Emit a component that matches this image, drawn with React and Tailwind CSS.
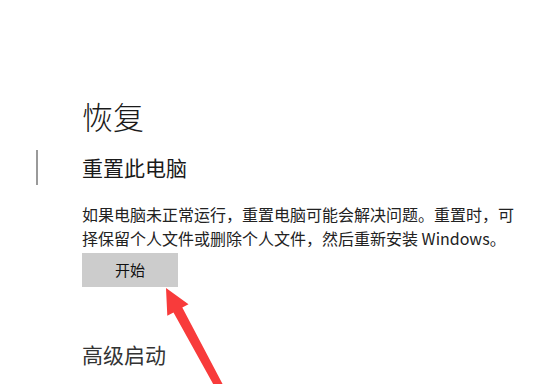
import React from 'react';

const font = { fontFamily: '"Noto Sans CJK SC", "Noto Sans", sans-serif' };

const App = () => {
  return (
    <div className="relative w-[557px] h-[384px] bg-white overflow-hidden flex" style={font}>
      {/* left nav rail, only the selection marker is visible */}
      <div className="w-[82px] shrink-0 pl-[36px] pt-[150px]">
        <div className="w-[2px] h-[35px] bg-[#9a9a9a]" />
      </div>

      <div className="flex-1 pt-[96px] text-[#1a1a1a]">
        <h1 className="text-[31px] leading-[40px] font-light">恢复</h1>
        <h2 className="mt-[16px] text-[21px] leading-[30px]">重置此电脑</h2>
        <div className="mt-[20px] text-[16px] leading-[24px] text-[#222]">
          <div className="whitespace-nowrap">如果电脑未正常运行，重置电脑可能会解决问题。重置时，可</div>
          <div className="whitespace-nowrap">择保留个人文件或删除个人文件，然后重新安装 Windows。</div>
        </div>
        <button className="mt-[3px] w-[96px] h-[34px] bg-[#cccccc] text-[15px] text-[#111]">开始</button>
        <h3 className="mt-[52px] text-[21px] leading-[30px] text-[#333]">高级启动</h3>
      </div>

      {/* red annotation arrow */}
      <svg className="absolute left-0 top-0" width="557" height="384" viewBox="0 0 557 384">
        <polygon
          points="166,288 188.5,304.3 182.3,307.6 231,400 222,400 173.5,312.4 167.3,315.7"
          fill="#f83b3b"
        />
      </svg>
    </div>
  );
};

export default App;
